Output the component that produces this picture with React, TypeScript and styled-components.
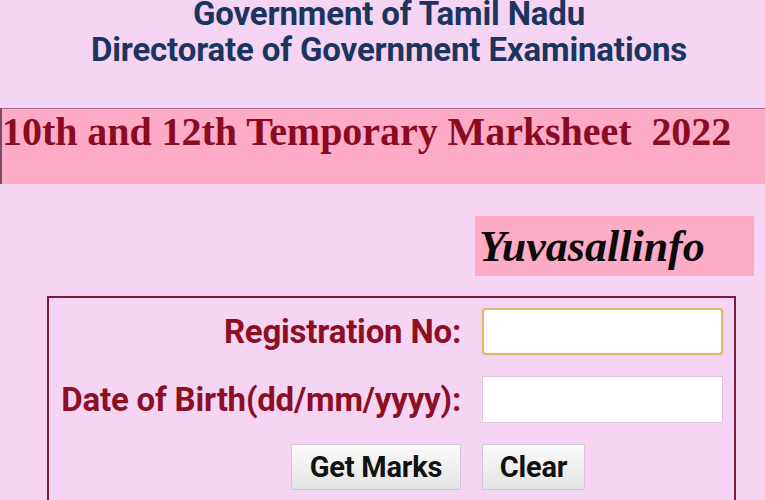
import React from "react";
import styled, { createGlobalStyle } from "styled-components";

const GlobalStyle = createGlobalStyle`
    html, body {
        margin: 0;
        padding: 0;
        background: #f5d4f4;
    }
    body {
        width: 765px;
        height: 500px;
        overflow: hidden;
    }
`

const Page = styled.div`
    width: 765px;
    height: 500px;
    overflow: hidden;
    background: #f5d4f4;
    display: flex;
    flex-direction: column;
`

const Header = styled.header`
    display: flex;
    flex-direction: column;
    align-items: center;
    margin-top: -4px;
    padding-left: 13px;
    font-family: Roboto, "Liberation Sans", sans-serif;
    font-weight: 700;
    font-size: 33px;
    line-height: 36px;
    color: #1b355f;
`

const HeaderLine = styled.div`
    white-space: nowrap;
    letter-spacing: -0.15px;
`

const Banner = styled.div`
    margin-top: 40px;
    height: 76px;
    background: #fdabc6;
    border-top: 1px solid #a86a8c;
    border-left: 2px solid #7a4a66;
    box-sizing: border-box;
`

const BannerTitle = styled.h1`
    margin: 0;
    font-family: "Liberation Serif", "Times New Roman", serif;
    font-weight: 700;
    font-size: 40px;
    line-height: 46px;
    color: #8a0b22;
    white-space: nowrap;
    letter-spacing: -0.05px;
`

const BrandRow = styled.div`
    display: flex;
    justify-content: flex-end;
    padding-right: 11px;
    margin-top: 32px;
`

const BrandBox = styled.div`
    width: 279px;
    height: 60px;
    background: #fdabc6;
    box-sizing: border-box;
    padding-left: 4px;
    display: flex;
    align-items: center;
`

const BrandText = styled.span`
    font-family: "Liberation Serif", "Times New Roman", serif;
    font-style: italic;
    font-weight: 700;
    font-size: 44px;
    color: #0a0a0a;
`

const FormBox = styled.div`
    margin: 20px 0 0 47px;
    width: 689px;
    flex: 1;
    box-sizing: border-box;
    border: 2px solid #7d1d3d;
    border-bottom: none;
    padding: 10px 11px 0 0;
    display: grid;
    grid-template-columns: 1fr 241px;
    column-gap: 21px;
    row-gap: 21px;
    align-content: start;
`

const Label = styled.label`
    justify-self: end;
    align-self: center;
    font-family: Roboto, "Liberation Sans", sans-serif;
    font-weight: 700;
    font-size: 33px;
    line-height: 40px;
    color: #8c0f24;
    white-space: nowrap;
    letter-spacing: -0.2px;
`

const TextInput = styled.input<{ focused?: boolean }>`
    width: 241px;
    height: 47px;
    box-sizing: border-box;
    background: #ffffff;
    border: ${({ focused }) => focused ? "2px solid #e2b869" : "1px solid #dcc6dc"};
    border-radius: ${({ focused }) => focused ? "4px" : "1px"};
    box-shadow: ${({ focused }) => focused ? "0 0 2px #f0d9a0" : "none"};
    outline: none;
`

const Button = styled.button<{ width: number }>`
    width: ${({ width }) => width}px;
    height: 46px;
    box-sizing: border-box;
    border: 1px solid #d4c8d2;
    border-radius: 2px;
    background: linear-gradient(#fbfbfb, #e4e4e4);
    font-family: Roboto, "Liberation Sans", sans-serif;
    font-weight: 700;
    font-size: 29px;
    color: #111111;
    padding: 0;
    letter-spacing: -0.2px;
`

const LeftCell = styled.div`
    justify-self: end;
`

const App = () => {
    return (
        <>
            <GlobalStyle />
            <Page>
                <Header>
                    <HeaderLine>Government of Tamil Nadu</HeaderLine>
                    <HeaderLine>Directorate of Government Examinations</HeaderLine>
                </Header>
                <Banner>
                    <BannerTitle>10th and 12th Temporary Marksheet&nbsp; 2022</BannerTitle>
                </Banner>
                <BrandRow>
                    <BrandBox>
                        <BrandText>Yuvasallinfo</BrandText>
                    </BrandBox>
                </BrandRow>
                <FormBox>
                    <Label>Registration No:</Label>
                    <TextInput focused />
                    <Label>Date of Birth(dd/mm/yyyy):</Label>
                    <TextInput />
                    <LeftCell>
                        <Button width={170}>Get Marks</Button>
                    </LeftCell>
                    <div>
                        <Button width={103}>Clear</Button>
                    </div>
                </FormBox>
            </Page>
        </>
    )
}

export default App
